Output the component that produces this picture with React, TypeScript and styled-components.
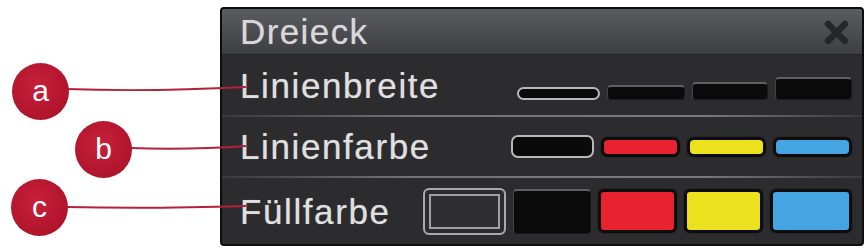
import React from 'react';
import styled, { createGlobalStyle, css } from 'styled-components';

const GlobalStyle = createGlobalStyle`
	html, body {
		margin: 0;
		padding: 0;
		background: #ffffff;
	}
	body {
		font-family: 'Liberation Sans', Arial, sans-serif;
	}
`;

const StyledStage = styled.div`
	position: relative;
	width: 868px;
	height: 248px;
	padding: 7px 0 0 220px;
	box-sizing: border-box;
	overflow: hidden;
`;

const StyledPanel = styled.div`
	width: 644px;
	height: 239px;
	box-sizing: border-box;
	border: 2px solid #0d0d0e;
	border-radius: 4px;
	background: #2c2c2e;
	display: flex;
	flex-direction: column;
	overflow: hidden;
`;

const StyledTitleBar = styled.div`
	height: 46px;
	flex: none;
	display: flex;
	align-items: center;
	justify-content: space-between;
	padding: 0 12px 0 18px;
	background: linear-gradient(#5b5c60, #46474b 70%, #3d3e42);
	border-bottom: 1px solid #232325;
	box-sizing: border-box;
`;

const StyledTitle = styled.div`
	color: #d8d8da;
	font-size: 35px;
	letter-spacing: 1.4px;
	line-height: 1;
	text-shadow: 0 0 1px rgba(230, 230, 232, 0.5);
`;

const StyledClose = styled.svg`
	width: 27px;
	height: 27px;
	margin-top: 2px;
`;

const StyledRow = styled.div<{ $height: number; $separator?: boolean }>`
	height: ${(p) => p.$height}px;
	flex: none;
	display: flex;
	align-items: center;
	justify-content: space-between;
	padding: 0 10px 0 18px;
	box-sizing: border-box;
	${(p) =>
		p.$separator &&
		css`
			border-bottom: 2px solid transparent;
			border-image: linear-gradient(90deg, #3a3a3c 0%, #747476 30%, #7a7a7c 75%, #3a3a3c 100%) 1;
		`}
`;

const StyledLabel = styled.div`
	color: #e0e0e1;
	font-size: 35px;
	letter-spacing: 1.6px;
	line-height: 1;
	white-space: nowrap;
	text-shadow: 0 0 1px rgba(230, 230, 232, 0.5);
`;

const StyledSwatches = styled.div<{ $align: 'center' | 'flex-end'; $bottom?: number }>`
	display: flex;
	gap: 7px;
	align-items: ${(p) => p.$align};
	align-self: ${(p) => (p.$align === 'flex-end' ? 'flex-end' : 'center')};
	padding-bottom: ${(p) => p.$bottom ?? 0}px;
`;

type SwatchKind = 'dark' | 'selected' | 'fillSelected' | 'color';

const StyledSwatch = styled.div<{ $kind: SwatchKind; $h: number; $w?: number; $color?: string; $round?: number }>`
	width: ${(p) => p.$w ?? 80}px;
	height: ${(p) => p.$h}px;
	box-sizing: border-box;
	border-radius: ${(p) => p.$round ?? 4}px;
	${(p) =>
		p.$kind === 'dark' &&
		css`
			background: #0b0b0c;
			border: 1px solid #1a1a1c;
			border-top: 2px solid #606062;
			border-left-color: #444446;
		`}
	${(p) =>
		p.$kind === 'selected' &&
		css`
			background: #0a0a0b;
			border: 2px solid #b8b8ba;
		`}
	${(p) =>
		p.$kind === 'fillSelected' &&
		css`
			background: #2e2e31;
			border: 2px solid #a9a9ab;
			border-radius: 6px;
			box-shadow: inset 0 0 0 4px #2c2c2e, inset 0 0 0 6px #a0a0a2;
		`}
	${(p) =>
		p.$kind === 'color' &&
		css`
			background: ${p.$color};
			border: 3px solid #0c0c0d;
			box-shadow: 0 0 0 1px #262628;
		`}
`;

const StyledLeaders = styled.svg`
	position: absolute;
	left: 0;
	top: 0;
	pointer-events: none;
`;

const StyledBadge = styled.div<{ $x: number; $y: number }>`
	position: absolute;
	left: ${(p) => p.$x - 28}px;
	top: ${(p) => p.$y - 28}px;
	width: 57px;
	height: 57px;
	border-radius: 50%;
	background: radial-gradient(circle at 45% 40%, #c8203a, #b0142c 70%, #a3122a);
	color: #ffffff;
	font-size: 30px;
	line-height: 55px;
	text-align: center;
`;

const lineWidths = [
	{ kind: 'selected' as SwatchKind, h: 13, w: 83, round: 7 },
	{ kind: 'dark' as SwatchKind, h: 15, w: 78, round: 4 },
	{ kind: 'dark' as SwatchKind, h: 18, w: 76, round: 4 },
	{ kind: 'dark' as SwatchKind, h: 23, w: 77, round: 4 },
];

const lineColors = ['#e8222e', '#ebe21d', '#45a5e2'];

const fillColors = ['#e8222e', '#ebe21d', '#45a5e2'];

const badges = [
	{ letter: 'a', x: 40, y: 91 },
	{ letter: 'b', x: 103, y: 149 },
	{ letter: 'c', x: 39, y: 207 },
];

const App: React.FC = () => {
	return (
		<StyledStage>
			<GlobalStyle />
			<StyledPanel>
				<StyledTitleBar>
					<StyledTitle>Dreieck</StyledTitle>
					<StyledClose viewBox="0 0 27 27">
						<path d="M5 5 L22 22 M22 5 L5 22" stroke="#262628" strokeWidth="6.5" strokeLinecap="round" />
					</StyledClose>
				</StyledTitleBar>
				<StyledRow $height={62} $separator>
					<StyledLabel>Linienbreite</StyledLabel>
					<StyledSwatches $align="flex-end" $bottom={15}>
						{lineWidths.map((s, i) => (
							<StyledSwatch key={i} $kind={s.kind} $h={s.h} $w={s.w} $round={s.round} />
						))}
					</StyledSwatches>
				</StyledRow>
				<StyledRow $height={61} $separator>
					<StyledLabel>Linienfarbe</StyledLabel>
					<StyledSwatches $align="center">
						<StyledSwatch $kind="selected" $h={23} $w={83} $round={7} />
						{lineColors.map((c) => (
							<StyledSwatch key={c} $kind="color" $h={20} $w={79} $color={c} $round={7} />
						))}
					</StyledSwatches>
				</StyledRow>
				<StyledRow $height={66}>
					<StyledLabel>Füllfarbe</StyledLabel>
					<StyledSwatches $align="center">
						<StyledSwatch $kind="fillSelected" $h={47} $w={83} />
						<StyledSwatch $kind="dark" $h={45} $w={78} />
						{fillColors.map((c, i) => (
							<StyledSwatch key={c} $kind="color" $h={44} $w={i === 2 ? 82 : 79} $color={c} $round={6} />
						))}
					</StyledSwatches>
				</StyledRow>
			</StyledPanel>
			<StyledLeaders width="868" height="248" viewBox="0 0 868 248">
				<path d="M66 89 Q150 92 246 87" stroke="#b3213a" strokeWidth="2" fill="none" />
				<path d="M129 148 Q190 150 246 146" stroke="#b3213a" strokeWidth="2" fill="none" />
				<path d="M66 207 Q150 209 246 206" stroke="#b3213a" strokeWidth="2" fill="none" />
			</StyledLeaders>
			{badges.map((b) => (
				<StyledBadge key={b.letter} $x={b.x} $y={b.y}>
					{b.letter}
				</StyledBadge>
			))}
		</StyledStage>
	);
};

export default App;
